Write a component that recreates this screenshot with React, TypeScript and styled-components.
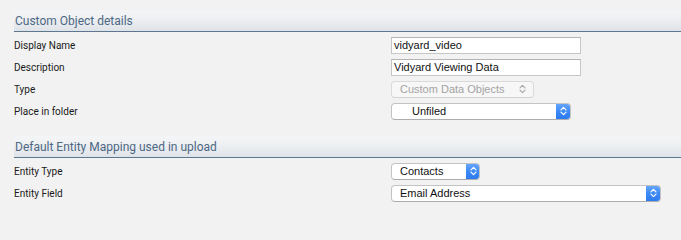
import React from "react";
import styled, { createGlobalStyle } from "styled-components";

const Global = createGlobalStyle`
  html, body { margin: 0; padding: 0; background: #f2f2f2; }
  body { font-family: Roboto, "Liberation Sans", Arial, sans-serif; }
`;

const Page = styled.div`
  width: 681px;
  height: 220px;
  box-sizing: border-box;
  padding: 10px 0 0 14px;
  background: #f2f2f2;
  overflow: hidden;
`;

const Section = styled.section<{ $gap?: number }>`
  margin-top: ${(p) => p.$gap ?? 0}px;
`;

const Header = styled.div`
  height: 20px;
  display: flex;
  align-items: center;
  padding-left: 1px;
  background: linear-gradient(to bottom, #f4f5f7 0%, #eef0f2 40%, #dfe3e8 100%);
  border-bottom: 1px solid #5d7791;
  color: #4d6884;
  font-size: 12px;
  padding-top: 1px;
`;

const Rows = styled.div`
  padding-top: 2px;
  display: flex;
  flex-direction: column;
`;

const Row = styled.div`
  height: 22px;
  display: grid;
  grid-template-columns: 377px 1fr;
  align-items: center;
`;

const Label = styled.div`
  font-size: 10px;
  color: #1a1a1a;
  padding-top: 1px;
`;

const TextInput = styled.div<{ $w: number }>`
  width: ${(p) => p.$w}px;
  height: 17px;
  box-sizing: border-box;
  background: #fff;
  border: 1px solid #c6c6c6;
  border-top-color: #b4b4b4;
  display: flex;
  align-items: center;
  padding-left: 2px;
  font-family: "Liberation Sans", Arial, sans-serif;
  font-size: 11px;
  color: #111;
`;

const SelectBox = styled.div<{ $w: number; $disabled?: boolean }>`
  width: ${(p) => p.$w}px;
  height: 17px;
  box-sizing: border-box;
  background: ${(p) => (p.$disabled ? "#f7f7f7" : "#fff")};
  border: 1px solid ${(p) => (p.$disabled ? "#dadada" : "#c3c3c3")};
  border-bottom-color: ${(p) => (p.$disabled ? "#d2d2d2" : "#adadad")};
  border-radius: 4px;
  display: flex;
  align-items: stretch;
  overflow: hidden;
  font-family: "Liberation Sans", Arial, sans-serif;
  font-size: 11px;
  color: ${(p) => (p.$disabled ? "#a3a3a3" : "#111")};
`;

const SelectText = styled.div<{ $indent?: number }>`
  flex: 1;
  display: flex;
  align-items: center;
  padding-left: ${(p) => p.$indent ?? 8}px;
  white-space: nowrap;
`;

const Stepper = styled.div<{ $disabled?: boolean; $w?: number }>`
  width: ${(p) => p.$w ?? 15}px;
  display: flex;
  align-items: center;
  justify-content: center;
  background: ${(p) =>
    p.$disabled ? "transparent" : "linear-gradient(to bottom, #6ba8fb 0%, #3c8af6 50%, #2a78ee 100%)"};
  border-radius: 0 3px 3px 0;
  margin: ${(p) => (p.$disabled ? "0" : "-1px -1px -1px 0")};
`;

const Chevrons: React.FC<{ color: string }> = ({ color }) => (
  <svg width="7" height="10" viewBox="0 0 7 10">
    <path d="M1 3.8 L3.5 1.3 L6 3.8" fill="none" stroke={color} strokeWidth="1.2" strokeLinecap="round" strokeLinejoin="round" />
    <path d="M1 6.2 L3.5 8.7 L6 6.2" fill="none" stroke={color} strokeWidth="1.2" strokeLinecap="round" strokeLinejoin="round" />
  </svg>
);

const Select: React.FC<{ w: number; value: string; disabled?: boolean; indent?: number; stepW?: number }> = ({
  w,
  value,
  disabled,
  indent,
  stepW,
}) => (
  <SelectBox $w={w} $disabled={disabled}>
    <SelectText $indent={indent}>{value}</SelectText>
    <Stepper $disabled={disabled} $w={stepW}>
      <Chevrons color={disabled ? "#a8a8a8" : "#ffffff"} />
    </Stepper>
  </SelectBox>
);

export default function App() {
  return (
    <>
      <Global />
      <Page>
        <Section>
          <Header>Custom Object details</Header>
          <Rows>
            <Row>
              <Label>Display Name</Label>
              <TextInput $w={190}>vidyard_video</TextInput>
            </Row>
            <Row>
              <Label>Description</Label>
              <TextInput $w={190}>Vidyard Viewing Data</TextInput>
            </Row>
            <Row>
              <Label>Type</Label>
              <Select w={143} value="Custom Data Objects" disabled stepW={22} />
            </Row>
            <Row>
              <Label>Place in folder</Label>
              <Select w={180} value="Unfiled" indent={20} />
            </Row>
          </Rows>
        </Section>
        <Section $gap={14}>
          <Header>Default Entity Mapping used in upload</Header>
          <Rows>
            <Row>
              <Label>Entity Type</Label>
              <Select w={89} value="Contacts" stepW={14} />
            </Row>
            <Row>
              <Label>Entity Field</Label>
              <Select w={270} value="Email Address" />
            </Row>
          </Rows>
        </Section>
      </Page>
    </>
  );
}
